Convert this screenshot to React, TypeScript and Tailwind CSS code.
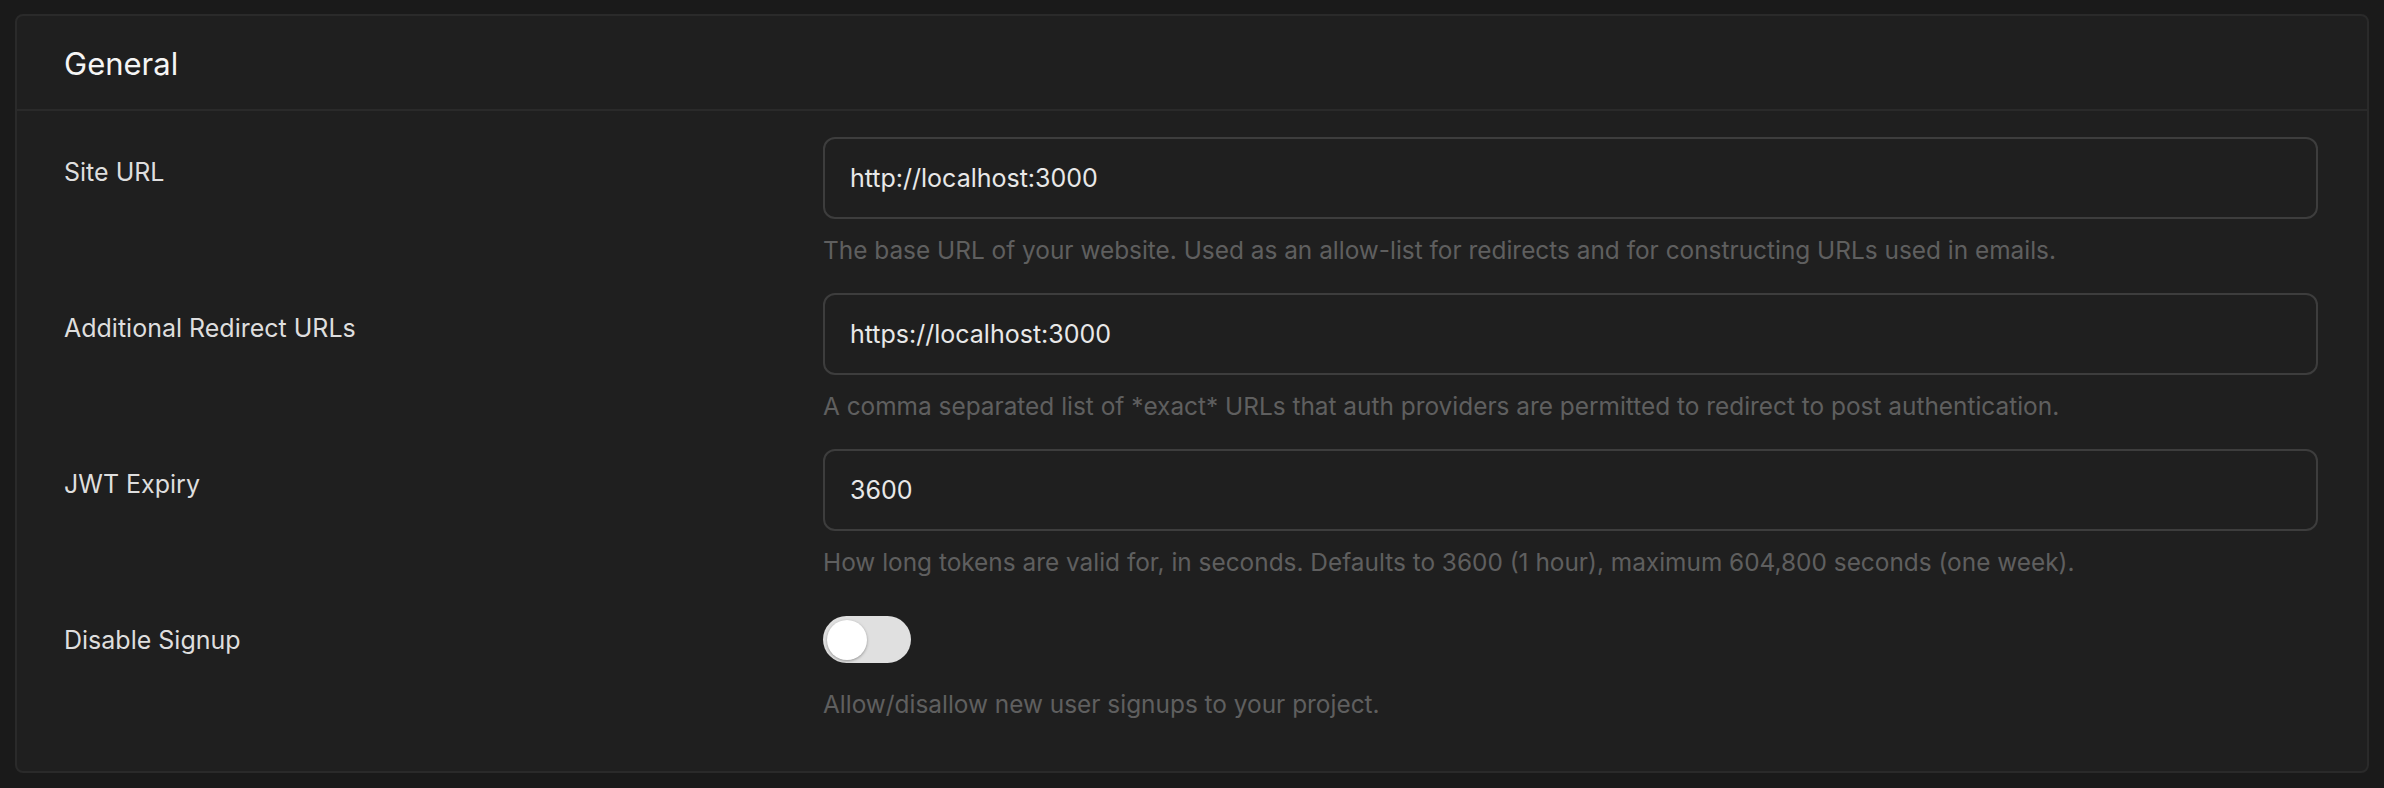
import { useState } from "react";

const fields = [
  {
    label: "Site URL",
    value: "http://localhost:3000",
    help: "The base URL of your website. Used as an allow-list for redirects and for constructing URLs used in emails.",
  },
  {
    label: "Additional Redirect URLs",
    value: "https://localhost:3000",
    help: "A comma separated list of *exact* URLs that auth providers are permitted to redirect to post authentication.",
  },
  {
    label: "JWT Expiry",
    value: "3600",
    help: "How long tokens are valid for, in seconds. Defaults to 3600 (1 hour), maximum 604,800 seconds (one week).",
  },
];

const App = () => {
  const [disabled, setDisabled] = useState(false);

  return (
    <div
      className="min-h-screen w-full bg-[#1a1a1a] px-[15px] pt-[14px] pb-[15px]"
      style={{ fontFamily: "Inter, 'Noto Sans', sans-serif" }}
    >
      <div className="rounded-[8px] border-2 border-[#2a2a2a] bg-[#1f1f1f]">
        <div className="flex h-[95px] items-center border-b-2 border-[#2a2a2a] px-[47px] pt-[4px]">
          <h2 className="text-[31px] font-normal text-[#f5f5f5]">General</h2>
        </div>
        <div className="pl-[47px] pr-[49px] pt-[26px] pb-[52px]">
          {fields.map((field, index) => (
            <div key={index} className="mb-[28px] grid grid-cols-[759px_1fr]">
              <label className="pt-[20px] text-[25px] leading-[30px] text-[#dedede]">
                {field.label}
              </label>
              <div>
                <input
                  type="text"
                  defaultValue={field.value}
                  className="h-[82px] w-full rounded-[12px] border-2 border-[#3d3d3d] bg-[#1f1f1f] px-[25px] text-[25px] text-[#e8e8e8] outline-none"
                />
                <p className="mt-[16px] text-[24.4px] leading-[30px] text-[#5f5f5f]">
                  {field.help}
                </p>
              </div>
            </div>
          ))}
          <div className="grid grid-cols-[759px_1fr]">
            <label className="pt-[20px] text-[25px] leading-[30px] text-[#dedede]">
              Disable Signup
            </label>
            <div className="pt-[11px]">
              <button
                type="button"
                onClick={() => setDisabled(!disabled)}
                className={`flex h-[47px] w-[88px] items-center rounded-full px-[4px] ${
                  disabled ? "bg-[#3ecf8e]" : "bg-[#e0e0e0]"
                }`}
              >
                <span
                  className={`h-[40px] w-[40px] rounded-full bg-white shadow-[0_1px_3px_rgba(0,0,0,0.35)] ${
                    disabled ? "ml-auto" : ""
                  }`}
                />
              </button>
              <p className="mt-[26px] text-[24.4px] leading-[30px] text-[#5f5f5f]">
                Allow/disallow new user signups to your project.
              </p>
            </div>
          </div>
        </div>
      </div>
    </div>
  );
};

export default App;
